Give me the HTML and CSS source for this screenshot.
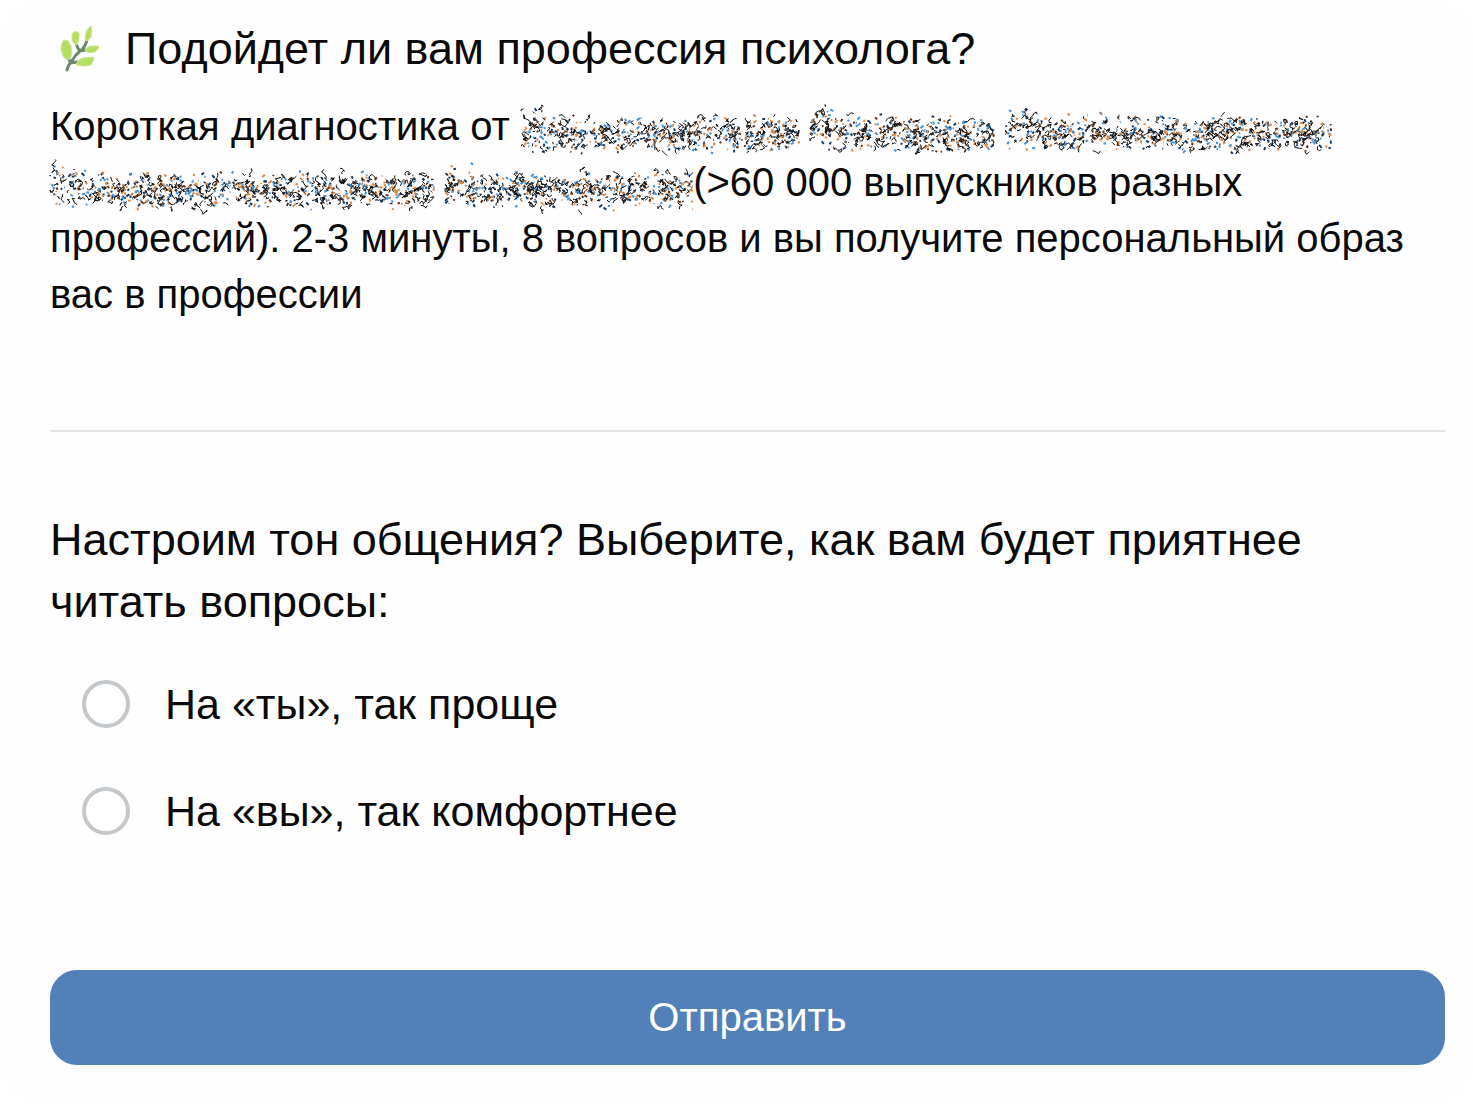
FILE: index.html
```html
<!DOCTYPE html>
<html lang="ru">
<head>
<meta charset="utf-8">
<meta name="viewport" content="width=device-width, initial-scale=1">
<title>Подойдет ли вам профессия психолога?</title>
<link rel="stylesheet" href="styles.css">
</head>
<body>
<form class="card">
  <header class="intro">
    <h1 class="title">
      <svg class="leaf" viewBox="0 0 40 48" aria-hidden="true">
        <path d="M7 45Q8 40 12 36Q15 30 20 26Q26 22 27 14M16 17Q17 23 20 26L27 25M10 38L18 37M7 31L11 38" fill="none" stroke="#6f8870" stroke-width="3" stroke-linecap="round"/>
        <g fill="#b5df5f" stroke="#d3e49a" stroke-width="1">
          <path d="M4 15L8 16L11 21Q13 28 10 34Q5 35 3 31L1 24Q1 18 4 15Z"/>
          <path d="M15 6L19 8L19 14L17 20Q13 19 12 15L12 9Z"/>
          <path d="M31 1L32 6L31 12Q29 15 26 16L25 11Q26 4 31 1Z"/>
          <path d="M25 26Q27 21 32 21L39 21Q38 25 35 27Q30 29 25 26Z"/>
          <path d="M16 40Q18 34 23 33L34 32Q34 36 31 40Q24 42 16 40Z"/>
        </g>
      </svg>
      <span>Подойдет ли вам профессия психолога?</span>
    </h1>
    <p class="lead">Короткая диагностика от <svg class="smudge" width="278" height="44" aria-hidden="true"></svg> <svg class="smudge" width="184" height="44" aria-hidden="true"></svg> <svg class="smudge" width="326" height="44" aria-hidden="true"></svg> <svg class="smudge" width="384" height="44" aria-hidden="true"></svg> <svg class="smudge" width="248" height="44" aria-hidden="true"></svg>(&gt;60 000 выпускников разных профессий). 2-3 минуты, 8 вопросов и вы получите персональный образ вас в профессии</p>
  </header>
  <hr class="divider">
  <fieldset class="question">
    <legend class="prompt">Настроим тон общения? Выберите, как вам будет приятнее читать вопросы:</legend>
    <label class="option"><input class="radio" type="radio" name="tone" value="informal"><span>На «ты», так проще</span></label>
    <label class="option"><input class="radio" type="radio" name="tone" value="formal"><span>На «вы», так комфортнее</span></label>
  </fieldset>
  <button class="submit" type="button">Отправить</button>
</form>
<script src="smudge.js"></script>
</body>
</html>
```
FILE: styles.css
```css
* { box-sizing: border-box; }

body {
  margin: 0;
  background: #fff;
  color: #0a0a0a;
  font-family: "Liberation Sans", Arial, sans-serif;
}

.card {
  padding: 16px 28px 39px 50px;
  background: #fefefe;
  border-radius: 42px;
}

.title {
  display: flex;
  align-items: center;
  gap: 25px;
  margin: 0 0 16px;
  padding-left: 10px;
  font-size: 45px;
  font-weight: 400;
  line-height: 66px;
}

.leaf { width: 40px; height: 48px; flex: none; }

.lead {
  margin: 0;
  font-size: 40px;
  line-height: 56px;
}

.smudge { vertical-align: -14px; overflow: visible; }

.divider {
  height: 2px;
  margin: 108px 0 77px;
  border: 0;
  background: #e3e4e6;
}

.question {
  min-width: 0;
  margin: 0;
  padding: 0;
  border: 0;
}

.prompt {
  padding: 0;
  margin-bottom: 41px;
  font-size: 45px;
  line-height: 62px;
}

.option {
  display: flex;
  align-items: center;
  gap: 35px;
  margin-bottom: 47px;
  padding-left: 32px;
  font-size: 43px;
  line-height: 60px;
}

.radio {
  appearance: none;
  flex: none;
  width: 48px;
  height: 48px;
  margin: 0;
  border: 4px solid #c5c8cb;
  border-radius: 50%;
  background: #fff;
}

.radio:checked { border-width: 14px; border-color: #5181b8; }

.submit {
  display: block;
  width: 100%;
  height: 95px;
  margin-top: 82px;
  border: 0;
  border-radius: 27px;
  background: #5181b8;
  color: #fff;
  font-family: inherit;
  font-size: 40px;
}
```
FILE: smudge.js
```js
// Fills each smudge with short, wandering ink strokes; the seed keeps them stable.
let seed = 7;
function rand() {
  seed = (seed * 1664525 + 1013904223) % 4294967296;
  return seed / 4294967296;
}

const inks = [
  ["#111111", 0.85], ["#d98a45", 0.45], ["#4593d6", 0.45], ["#123a68", 0.35], ["#6b2f10", 0.2]
];

document.querySelectorAll(".smudge").forEach((svg) => {
  const width = svg.width.baseVal.value;
  inks.forEach(([color, density]) => {
    let d = "";
    for (let i = 0; i < width * density; i++) {
      let x = rand() * width;
      const tall = x < 26 ? 4 : 0;
      let y = 24 - tall + (rand() + rand() - 1) * (20 + tall);
      d += `M${x.toFixed(1)} ${y.toFixed(1)}`;
      const steps = color === "#111111" ? 1 + Math.floor(rand() * 6) : 1;
      for (let s = 0; s < steps; s++) {
        x = Math.min(width, Math.max(0, x + (rand() - 0.5) * 6));
        y += (rand() - 0.5) * 6;
        d += `L${x.toFixed(1)} ${y.toFixed(1)}`;
      }
    }
    const path = document.createElementNS("http://www.w3.org/2000/svg", "path");
    path.setAttribute("d", d);
    path.setAttribute("fill", "none");
    path.setAttribute("stroke", color);
    path.setAttribute("stroke-width", color === "#111111" ? "1" : "2");
    svg.prepend(path);
  });
});
```
